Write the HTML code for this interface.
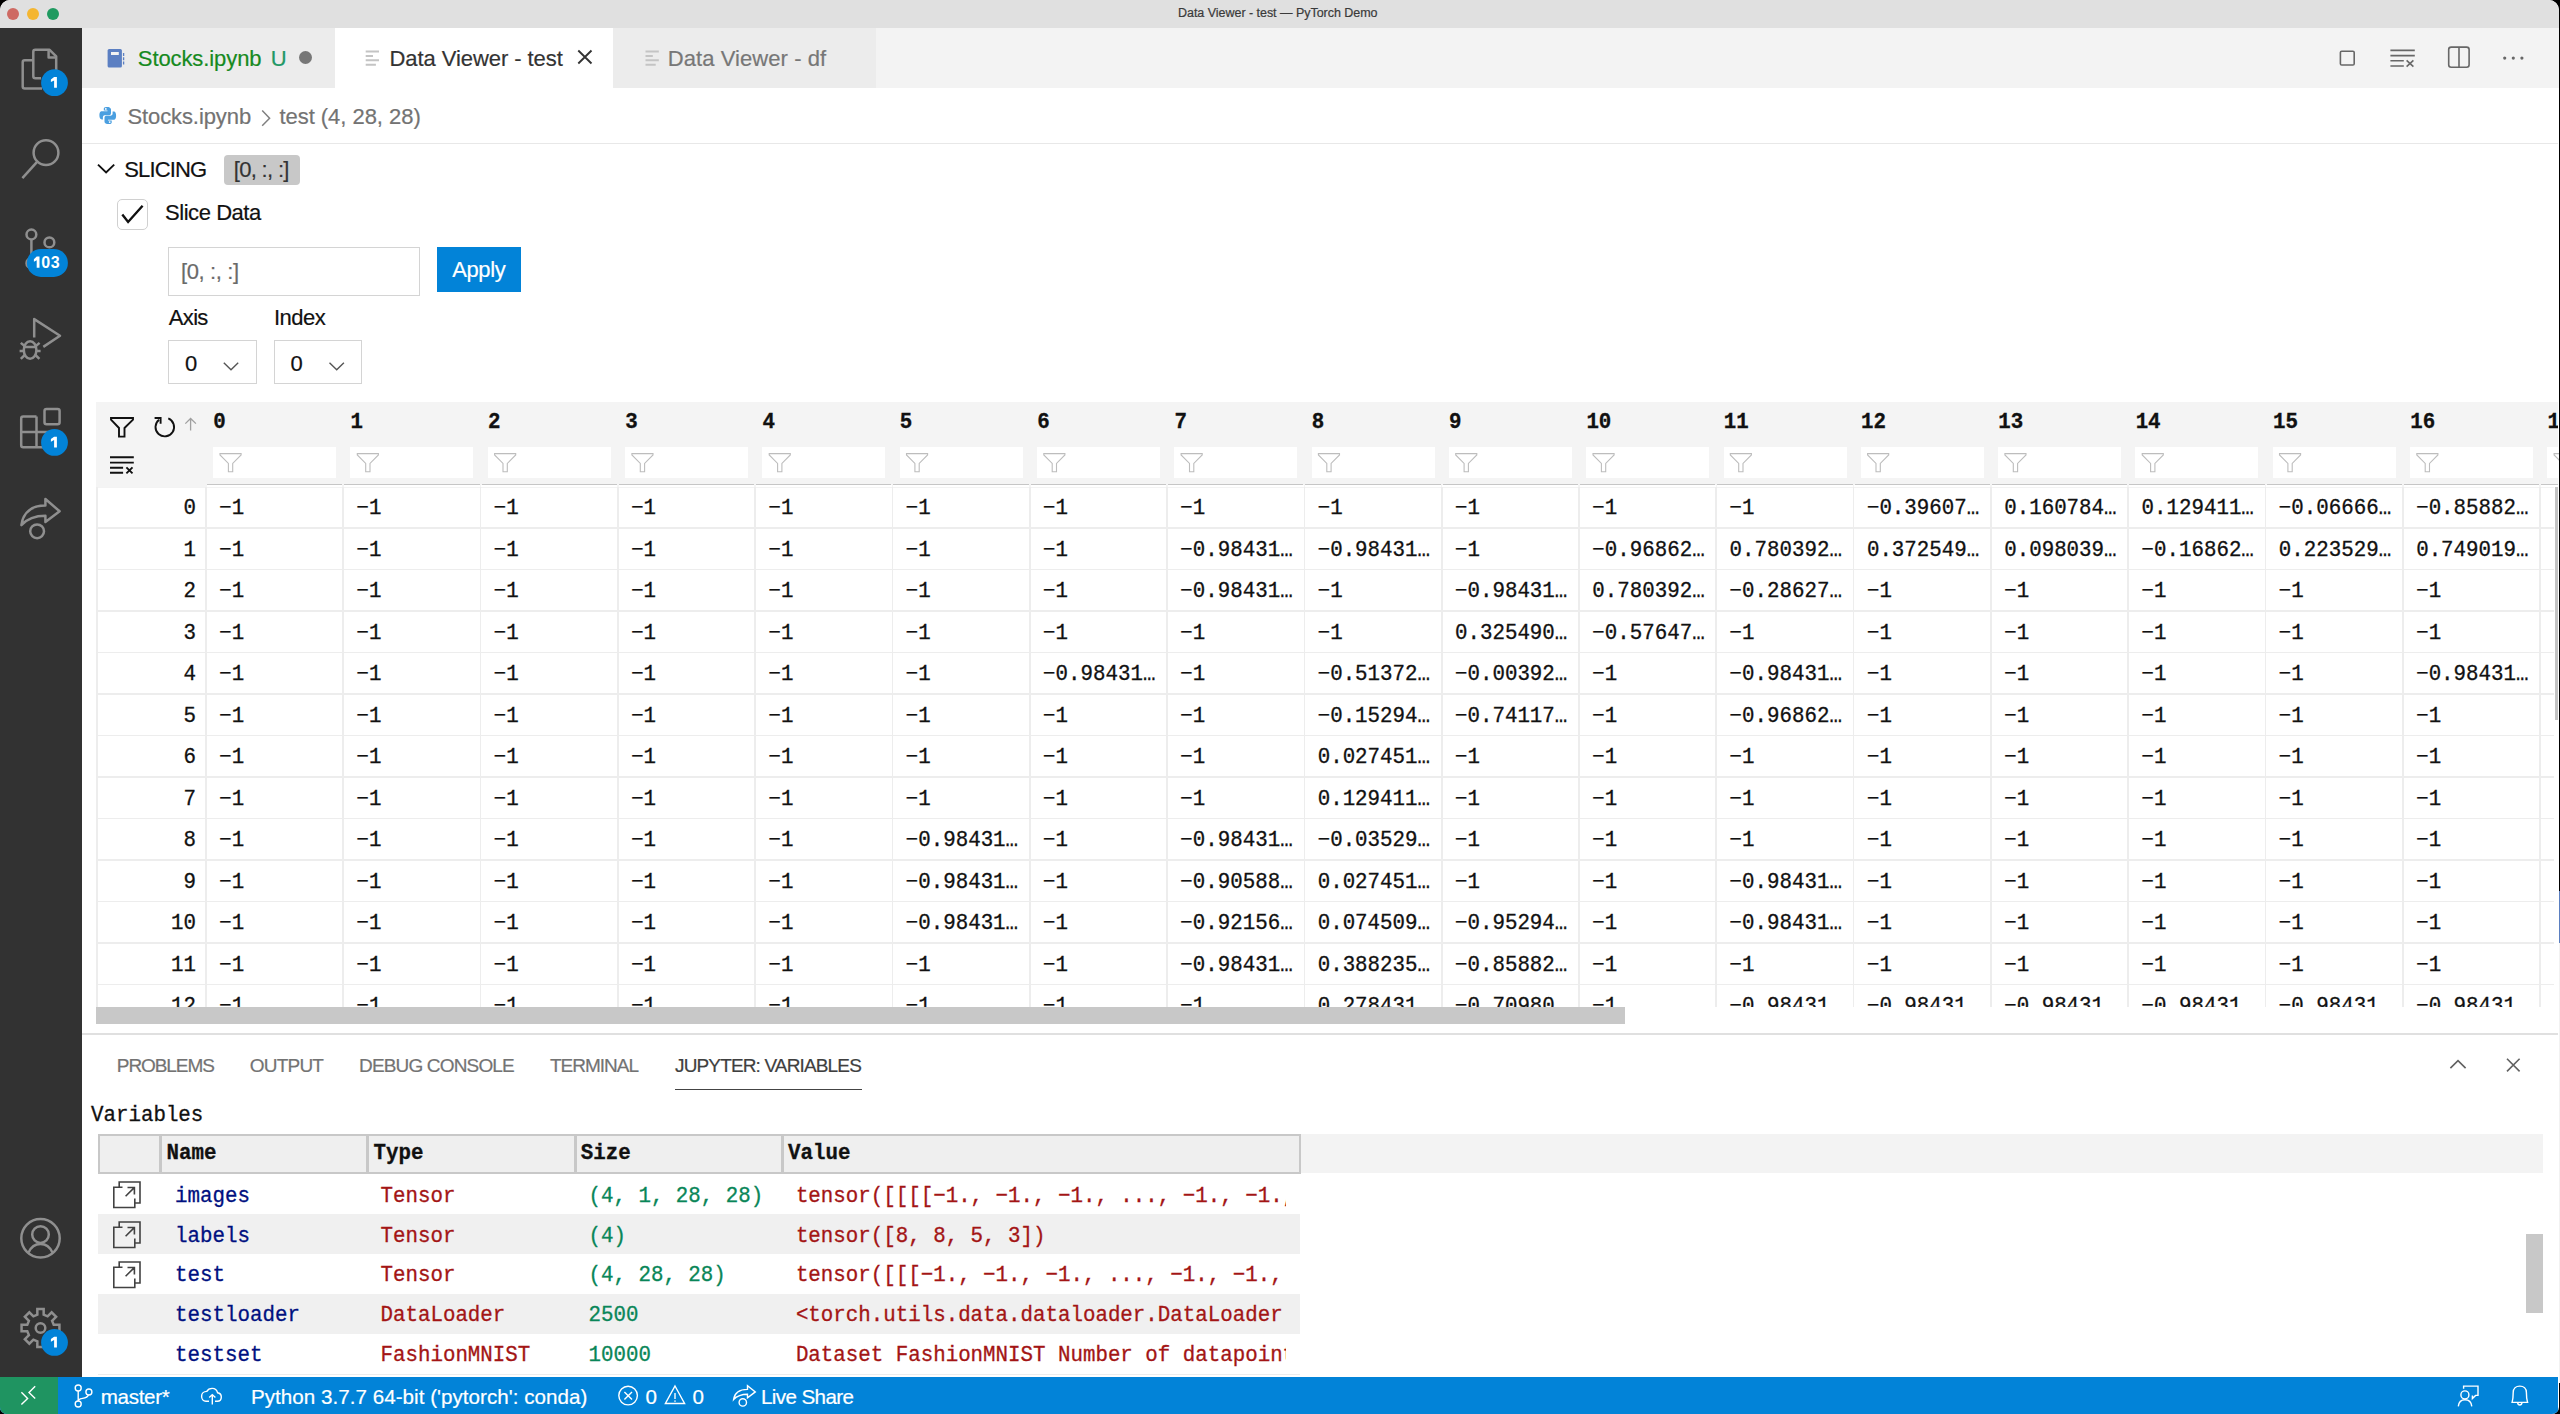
<!DOCTYPE html>
<html><head><meta charset="utf-8"><style>
*{box-sizing:border-box}
html,body{margin:0;padding:0}
body{width:2560px;height:1414px;overflow:hidden;background:#000;position:relative;font-family:"Liberation Sans", sans-serif}
.a{position:absolute}
.t{position:absolute;white-space:pre;line-height:1;-webkit-text-stroke:0.2px currentColor}
.m{font-family:"Liberation Mono", monospace;-webkit-text-stroke:0.3px currentColor}
svg{position:absolute;overflow:visible}
</style></head>
<body>
<div class="a" style="left:0;top:0;width:2559px;height:1414px;background:#fff;border-radius:10px 10px 7px 7px;overflow:hidden"><div class="a" style="left:0px;top:0px;width:2560px;height:28px;background:#e0e0e0;"></div><div class="a" style="left:7px;top:8px;width:12px;height:12px;background:#ce6a63;border-radius:6px"></div><div class="a" style="left:27px;top:8px;width:12px;height:12px;background:#f4b631;border-radius:6px"></div><div class="a" style="left:47px;top:8px;width:12px;height:12px;background:#1f9a60;border-radius:6px"></div><div class="t" style="left:1178.00px;top:7.22px;font-size:12.5px;color:#3a3a3a;letter-spacing:-0.031px;font-weight:normal;">Data Viewer - test — PyTorch Demo</div><div class="a" style="left:0px;top:28px;width:82px;height:1349px;background:#323232;"></div><div class="a" style="left:82px;top:28px;width:2478px;height:60px;background:#f3f3f3;"></div><div class="a" style="left:82px;top:28px;width:253px;height:60px;background:#ececec;"></div><div class="a" style="left:335px;top:28px;width:278px;height:60px;background:#ffffff;"></div><div class="a" style="left:613px;top:28px;width:263px;height:60px;background:#ececec;"></div><div class="t" style="left:137.80px;top:47.87px;font-size:22px;color:#168a1e;letter-spacing:-0.091px;font-weight:normal;">Stocks.ipynb</div><div class="t" style="left:270.80px;top:47.87px;font-size:22px;color:#239866;letter-spacing:0.000px;font-weight:normal;">U</div><div class="a" style="left:299px;top:50.5px;width:13px;height:13px;background:#777;border-radius:7px"></div><div class="t" style="left:389.40px;top:47.87px;font-size:22px;color:#333333;letter-spacing:-0.059px;font-weight:normal;">Data Viewer - test</div><div class="t" style="left:667.80px;top:47.87px;font-size:22px;color:#777777;letter-spacing:0.067px;font-weight:normal;">Data Viewer - df</div><div class="a" style="left:82px;top:143px;width:2476px;height:1px;background:#e8e8e8;"></div><div class="t" style="left:127.40px;top:105.87px;font-size:22px;color:#737373;letter-spacing:-0.091px;font-weight:normal;">Stocks.ipynb</div><div class="t" style="left:279.40px;top:105.87px;font-size:22px;color:#737373;letter-spacing:-0.033px;font-weight:normal;">test (4, 28, 28)</div><div class="t" style="left:124.20px;top:158.77px;font-size:22px;color:#111111;letter-spacing:-0.833px;font-weight:normal;">SLICING</div><div class="a" style="left:224px;top:155px;width:76px;height:30px;background:#c8c8c8;border-radius:4px"></div><div class="t" style="left:233.80px;top:158.67px;font-size:22px;color:#333333;letter-spacing:-0.688px;font-weight:normal;">[0, :, :]</div><div class="a" style="left:117px;top:199px;width:31px;height:31px;background:#fff;border-radius:5px;border:1px solid #d0d0d0"></div><div class="t" style="left:165.00px;top:202.37px;font-size:22px;color:#111111;letter-spacing:-0.444px;font-weight:normal;">Slice Data</div><div class="a" style="left:168px;top:247px;width:252px;height:49px;background:#fff;border:1.2px solid #d4d4d4"></div><div class="t" style="left:181.00px;top:261.37px;font-size:22px;color:#6a6a6a;letter-spacing:-0.375px;font-weight:normal;">[0, :, :]</div><div class="a" style="left:437px;top:247px;width:84px;height:45px;background:#0283d8;"></div><div class="t" style="left:452.20px;top:259.17px;font-size:22px;color:#ffffff;letter-spacing:-0.375px;font-weight:normal;">Apply</div><div class="t" style="left:168.80px;top:307.17px;font-size:22px;color:#111111;letter-spacing:-0.667px;font-weight:normal;">Axis</div><div class="t" style="left:274.00px;top:307.17px;font-size:22px;color:#111111;letter-spacing:-0.500px;font-weight:normal;">Index</div><div class="a" style="left:168px;top:340px;width:89px;height:44px;background:#fff;border:1.2px solid #d4d4d4"></div><div class="a" style="left:274px;top:340px;width:88px;height:44px;background:#fff;border:1.2px solid #d4d4d4"></div><div class="t" style="left:185.00px;top:353.17px;font-size:22px;color:#111111;letter-spacing:0.000px;font-weight:normal;">0</div><div class="t" style="left:290.60px;top:353.17px;font-size:22px;color:#111111;letter-spacing:0.000px;font-weight:normal;">0</div><div class="a" style="left:96px;top:401.5px;width:2462px;height:85.5px;background:#f4f4f4;"></div><div class="a" style="left:206.90px;top:484px;width:135.31px;height:1px;background:#c6c6c6;"></div><div class="a" style="left:206.70px;top:485px;width:135.71px;height:2.4px;background:#ffffff;"></div><div class="a" style="left:344.21px;top:484px;width:135.31px;height:1px;background:#c6c6c6;"></div><div class="a" style="left:344.01px;top:485px;width:135.71px;height:2.4px;background:#ffffff;"></div><div class="a" style="left:481.52px;top:484px;width:135.31px;height:1px;background:#c6c6c6;"></div><div class="a" style="left:481.32px;top:485px;width:135.71px;height:2.4px;background:#ffffff;"></div><div class="a" style="left:618.83px;top:484px;width:135.31px;height:1px;background:#c6c6c6;"></div><div class="a" style="left:618.63px;top:485px;width:135.71px;height:2.4px;background:#ffffff;"></div><div class="a" style="left:756.14px;top:484px;width:135.31px;height:1px;background:#c6c6c6;"></div><div class="a" style="left:755.94px;top:485px;width:135.71px;height:2.4px;background:#ffffff;"></div><div class="a" style="left:893.45px;top:484px;width:135.31px;height:1px;background:#c6c6c6;"></div><div class="a" style="left:893.25px;top:485px;width:135.71px;height:2.4px;background:#ffffff;"></div><div class="a" style="left:1030.76px;top:484px;width:135.31px;height:1px;background:#c6c6c6;"></div><div class="a" style="left:1030.56px;top:485px;width:135.71px;height:2.4px;background:#ffffff;"></div><div class="a" style="left:1168.07px;top:484px;width:135.31px;height:1px;background:#c6c6c6;"></div><div class="a" style="left:1167.87px;top:485px;width:135.71px;height:2.4px;background:#ffffff;"></div><div class="a" style="left:1305.38px;top:484px;width:135.31px;height:1px;background:#c6c6c6;"></div><div class="a" style="left:1305.18px;top:485px;width:135.71px;height:2.4px;background:#ffffff;"></div><div class="a" style="left:1442.69px;top:484px;width:135.31px;height:1px;background:#c6c6c6;"></div><div class="a" style="left:1442.49px;top:485px;width:135.71px;height:2.4px;background:#ffffff;"></div><div class="a" style="left:1580.00px;top:484px;width:135.31px;height:1px;background:#c6c6c6;"></div><div class="a" style="left:1579.80px;top:485px;width:135.71px;height:2.4px;background:#ffffff;"></div><div class="a" style="left:1717.31px;top:484px;width:135.31px;height:1px;background:#c6c6c6;"></div><div class="a" style="left:1717.11px;top:485px;width:135.71px;height:2.4px;background:#ffffff;"></div><div class="a" style="left:1854.62px;top:484px;width:135.31px;height:1px;background:#c6c6c6;"></div><div class="a" style="left:1854.42px;top:485px;width:135.71px;height:2.4px;background:#ffffff;"></div><div class="a" style="left:1991.93px;top:484px;width:135.31px;height:1px;background:#c6c6c6;"></div><div class="a" style="left:1991.73px;top:485px;width:135.71px;height:2.4px;background:#ffffff;"></div><div class="a" style="left:2129.24px;top:484px;width:135.31px;height:1px;background:#c6c6c6;"></div><div class="a" style="left:2129.04px;top:485px;width:135.71px;height:2.4px;background:#ffffff;"></div><div class="a" style="left:2266.55px;top:484px;width:135.31px;height:1px;background:#c6c6c6;"></div><div class="a" style="left:2266.35px;top:485px;width:135.71px;height:2.4px;background:#ffffff;"></div><div class="a" style="left:2403.86px;top:484px;width:135.31px;height:1px;background:#c6c6c6;"></div><div class="a" style="left:2403.66px;top:485px;width:135.71px;height:2.4px;background:#ffffff;"></div><div class="a" style="left:2541.17px;top:484px;width:135.31px;height:1px;background:#c6c6c6;"></div><div class="a" style="left:2540.97px;top:485px;width:135.71px;height:2.4px;background:#ffffff;"></div><div class="a" style="left:0;top:487px;width:2558px;height:520px;overflow:hidden"><div class="a" style="left:96px;top:0px;width:2458px;height:1.2px;background:#f3f3f3;"></div><div class="a" style="left:96px;top:40.05px;width:2458px;height:1.7px;background:#ededed;"></div><div class="t m" style="left:195.90px;top:12.07px;font-size:20.8px;color:#111;font-weight:normal;transform-origin:100% 15.93px;transform:translateX(-100%) scaleY(1.03);">0</div><div class="t m" style="left:219.20px;top:12.07px;font-size:20.8px;color:#111;font-weight:normal;transform-origin:0 15.93px;transform:scaleY(1.03);">−1</div><div class="t m" style="left:356.51px;top:12.07px;font-size:20.8px;color:#111;font-weight:normal;transform-origin:0 15.93px;transform:scaleY(1.03);">−1</div><div class="t m" style="left:493.82px;top:12.07px;font-size:20.8px;color:#111;font-weight:normal;transform-origin:0 15.93px;transform:scaleY(1.03);">−1</div><div class="t m" style="left:631.13px;top:12.07px;font-size:20.8px;color:#111;font-weight:normal;transform-origin:0 15.93px;transform:scaleY(1.03);">−1</div><div class="t m" style="left:768.44px;top:12.07px;font-size:20.8px;color:#111;font-weight:normal;transform-origin:0 15.93px;transform:scaleY(1.03);">−1</div><div class="t m" style="left:905.75px;top:12.07px;font-size:20.8px;color:#111;font-weight:normal;transform-origin:0 15.93px;transform:scaleY(1.03);">−1</div><div class="t m" style="left:1043.06px;top:12.07px;font-size:20.8px;color:#111;font-weight:normal;transform-origin:0 15.93px;transform:scaleY(1.03);">−1</div><div class="t m" style="left:1180.37px;top:12.07px;font-size:20.8px;color:#111;font-weight:normal;transform-origin:0 15.93px;transform:scaleY(1.03);">−1</div><div class="t m" style="left:1317.68px;top:12.07px;font-size:20.8px;color:#111;font-weight:normal;transform-origin:0 15.93px;transform:scaleY(1.03);">−1</div><div class="t m" style="left:1454.99px;top:12.07px;font-size:20.8px;color:#111;font-weight:normal;transform-origin:0 15.93px;transform:scaleY(1.03);">−1</div><div class="t m" style="left:1592.30px;top:12.07px;font-size:20.8px;color:#111;font-weight:normal;transform-origin:0 15.93px;transform:scaleY(1.03);">−1</div><div class="t m" style="left:1729.61px;top:12.07px;font-size:20.8px;color:#111;font-weight:normal;transform-origin:0 15.93px;transform:scaleY(1.03);">−1</div><div class="t m" style="left:1866.92px;top:12.07px;font-size:20.8px;color:#111;font-weight:normal;transform-origin:0 15.93px;transform:scaleY(1.03);">−0.39607…</div><div class="t m" style="left:2004.23px;top:12.07px;font-size:20.8px;color:#111;font-weight:normal;transform-origin:0 15.93px;transform:scaleY(1.03);">0.160784…</div><div class="t m" style="left:2141.54px;top:12.07px;font-size:20.8px;color:#111;font-weight:normal;transform-origin:0 15.93px;transform:scaleY(1.03);">0.129411…</div><div class="t m" style="left:2278.85px;top:12.07px;font-size:20.8px;color:#111;font-weight:normal;transform-origin:0 15.93px;transform:scaleY(1.03);">−0.06666…</div><div class="t m" style="left:2416.16px;top:12.07px;font-size:20.8px;color:#111;font-weight:normal;transform-origin:0 15.93px;transform:scaleY(1.03);">−0.85882…</div><div class="a" style="left:96px;top:81.57px;width:2458px;height:1.7px;background:#ededed;"></div><div class="t m" style="left:195.90px;top:53.59px;font-size:20.8px;color:#111;font-weight:normal;transform-origin:100% 15.93px;transform:translateX(-100%) scaleY(1.03);">1</div><div class="t m" style="left:219.20px;top:53.59px;font-size:20.8px;color:#111;font-weight:normal;transform-origin:0 15.93px;transform:scaleY(1.03);">−1</div><div class="t m" style="left:356.51px;top:53.59px;font-size:20.8px;color:#111;font-weight:normal;transform-origin:0 15.93px;transform:scaleY(1.03);">−1</div><div class="t m" style="left:493.82px;top:53.59px;font-size:20.8px;color:#111;font-weight:normal;transform-origin:0 15.93px;transform:scaleY(1.03);">−1</div><div class="t m" style="left:631.13px;top:53.59px;font-size:20.8px;color:#111;font-weight:normal;transform-origin:0 15.93px;transform:scaleY(1.03);">−1</div><div class="t m" style="left:768.44px;top:53.59px;font-size:20.8px;color:#111;font-weight:normal;transform-origin:0 15.93px;transform:scaleY(1.03);">−1</div><div class="t m" style="left:905.75px;top:53.59px;font-size:20.8px;color:#111;font-weight:normal;transform-origin:0 15.93px;transform:scaleY(1.03);">−1</div><div class="t m" style="left:1043.06px;top:53.59px;font-size:20.8px;color:#111;font-weight:normal;transform-origin:0 15.93px;transform:scaleY(1.03);">−1</div><div class="t m" style="left:1180.37px;top:53.59px;font-size:20.8px;color:#111;font-weight:normal;transform-origin:0 15.93px;transform:scaleY(1.03);">−0.98431…</div><div class="t m" style="left:1317.68px;top:53.59px;font-size:20.8px;color:#111;font-weight:normal;transform-origin:0 15.93px;transform:scaleY(1.03);">−0.98431…</div><div class="t m" style="left:1454.99px;top:53.59px;font-size:20.8px;color:#111;font-weight:normal;transform-origin:0 15.93px;transform:scaleY(1.03);">−1</div><div class="t m" style="left:1592.30px;top:53.59px;font-size:20.8px;color:#111;font-weight:normal;transform-origin:0 15.93px;transform:scaleY(1.03);">−0.96862…</div><div class="t m" style="left:1729.61px;top:53.59px;font-size:20.8px;color:#111;font-weight:normal;transform-origin:0 15.93px;transform:scaleY(1.03);">0.780392…</div><div class="t m" style="left:1866.92px;top:53.59px;font-size:20.8px;color:#111;font-weight:normal;transform-origin:0 15.93px;transform:scaleY(1.03);">0.372549…</div><div class="t m" style="left:2004.23px;top:53.59px;font-size:20.8px;color:#111;font-weight:normal;transform-origin:0 15.93px;transform:scaleY(1.03);">0.098039…</div><div class="t m" style="left:2141.54px;top:53.59px;font-size:20.8px;color:#111;font-weight:normal;transform-origin:0 15.93px;transform:scaleY(1.03);">−0.16862…</div><div class="t m" style="left:2278.85px;top:53.59px;font-size:20.8px;color:#111;font-weight:normal;transform-origin:0 15.93px;transform:scaleY(1.03);">0.223529…</div><div class="t m" style="left:2416.16px;top:53.59px;font-size:20.8px;color:#111;font-weight:normal;transform-origin:0 15.93px;transform:scaleY(1.03);">0.749019…</div><div class="a" style="left:96px;top:123.09px;width:2458px;height:1.7px;background:#ededed;"></div><div class="t m" style="left:195.90px;top:95.11px;font-size:20.8px;color:#111;font-weight:normal;transform-origin:100% 15.93px;transform:translateX(-100%) scaleY(1.03);">2</div><div class="t m" style="left:219.20px;top:95.11px;font-size:20.8px;color:#111;font-weight:normal;transform-origin:0 15.93px;transform:scaleY(1.03);">−1</div><div class="t m" style="left:356.51px;top:95.11px;font-size:20.8px;color:#111;font-weight:normal;transform-origin:0 15.93px;transform:scaleY(1.03);">−1</div><div class="t m" style="left:493.82px;top:95.11px;font-size:20.8px;color:#111;font-weight:normal;transform-origin:0 15.93px;transform:scaleY(1.03);">−1</div><div class="t m" style="left:631.13px;top:95.11px;font-size:20.8px;color:#111;font-weight:normal;transform-origin:0 15.93px;transform:scaleY(1.03);">−1</div><div class="t m" style="left:768.44px;top:95.11px;font-size:20.8px;color:#111;font-weight:normal;transform-origin:0 15.93px;transform:scaleY(1.03);">−1</div><div class="t m" style="left:905.75px;top:95.11px;font-size:20.8px;color:#111;font-weight:normal;transform-origin:0 15.93px;transform:scaleY(1.03);">−1</div><div class="t m" style="left:1043.06px;top:95.11px;font-size:20.8px;color:#111;font-weight:normal;transform-origin:0 15.93px;transform:scaleY(1.03);">−1</div><div class="t m" style="left:1180.37px;top:95.11px;font-size:20.8px;color:#111;font-weight:normal;transform-origin:0 15.93px;transform:scaleY(1.03);">−0.98431…</div><div class="t m" style="left:1317.68px;top:95.11px;font-size:20.8px;color:#111;font-weight:normal;transform-origin:0 15.93px;transform:scaleY(1.03);">−1</div><div class="t m" style="left:1454.99px;top:95.11px;font-size:20.8px;color:#111;font-weight:normal;transform-origin:0 15.93px;transform:scaleY(1.03);">−0.98431…</div><div class="t m" style="left:1592.30px;top:95.11px;font-size:20.8px;color:#111;font-weight:normal;transform-origin:0 15.93px;transform:scaleY(1.03);">0.780392…</div><div class="t m" style="left:1729.61px;top:95.11px;font-size:20.8px;color:#111;font-weight:normal;transform-origin:0 15.93px;transform:scaleY(1.03);">−0.28627…</div><div class="t m" style="left:1866.92px;top:95.11px;font-size:20.8px;color:#111;font-weight:normal;transform-origin:0 15.93px;transform:scaleY(1.03);">−1</div><div class="t m" style="left:2004.23px;top:95.11px;font-size:20.8px;color:#111;font-weight:normal;transform-origin:0 15.93px;transform:scaleY(1.03);">−1</div><div class="t m" style="left:2141.54px;top:95.11px;font-size:20.8px;color:#111;font-weight:normal;transform-origin:0 15.93px;transform:scaleY(1.03);">−1</div><div class="t m" style="left:2278.85px;top:95.11px;font-size:20.8px;color:#111;font-weight:normal;transform-origin:0 15.93px;transform:scaleY(1.03);">−1</div><div class="t m" style="left:2416.16px;top:95.11px;font-size:20.8px;color:#111;font-weight:normal;transform-origin:0 15.93px;transform:scaleY(1.03);">−1</div><div class="a" style="left:96px;top:164.61px;width:2458px;height:1.7px;background:#ededed;"></div><div class="t m" style="left:195.90px;top:136.63px;font-size:20.8px;color:#111;font-weight:normal;transform-origin:100% 15.93px;transform:translateX(-100%) scaleY(1.03);">3</div><div class="t m" style="left:219.20px;top:136.63px;font-size:20.8px;color:#111;font-weight:normal;transform-origin:0 15.93px;transform:scaleY(1.03);">−1</div><div class="t m" style="left:356.51px;top:136.63px;font-size:20.8px;color:#111;font-weight:normal;transform-origin:0 15.93px;transform:scaleY(1.03);">−1</div><div class="t m" style="left:493.82px;top:136.63px;font-size:20.8px;color:#111;font-weight:normal;transform-origin:0 15.93px;transform:scaleY(1.03);">−1</div><div class="t m" style="left:631.13px;top:136.63px;font-size:20.8px;color:#111;font-weight:normal;transform-origin:0 15.93px;transform:scaleY(1.03);">−1</div><div class="t m" style="left:768.44px;top:136.63px;font-size:20.8px;color:#111;font-weight:normal;transform-origin:0 15.93px;transform:scaleY(1.03);">−1</div><div class="t m" style="left:905.75px;top:136.63px;font-size:20.8px;color:#111;font-weight:normal;transform-origin:0 15.93px;transform:scaleY(1.03);">−1</div><div class="t m" style="left:1043.06px;top:136.63px;font-size:20.8px;color:#111;font-weight:normal;transform-origin:0 15.93px;transform:scaleY(1.03);">−1</div><div class="t m" style="left:1180.37px;top:136.63px;font-size:20.8px;color:#111;font-weight:normal;transform-origin:0 15.93px;transform:scaleY(1.03);">−1</div><div class="t m" style="left:1317.68px;top:136.63px;font-size:20.8px;color:#111;font-weight:normal;transform-origin:0 15.93px;transform:scaleY(1.03);">−1</div><div class="t m" style="left:1454.99px;top:136.63px;font-size:20.8px;color:#111;font-weight:normal;transform-origin:0 15.93px;transform:scaleY(1.03);">0.325490…</div><div class="t m" style="left:1592.30px;top:136.63px;font-size:20.8px;color:#111;font-weight:normal;transform-origin:0 15.93px;transform:scaleY(1.03);">−0.57647…</div><div class="t m" style="left:1729.61px;top:136.63px;font-size:20.8px;color:#111;font-weight:normal;transform-origin:0 15.93px;transform:scaleY(1.03);">−1</div><div class="t m" style="left:1866.92px;top:136.63px;font-size:20.8px;color:#111;font-weight:normal;transform-origin:0 15.93px;transform:scaleY(1.03);">−1</div><div class="t m" style="left:2004.23px;top:136.63px;font-size:20.8px;color:#111;font-weight:normal;transform-origin:0 15.93px;transform:scaleY(1.03);">−1</div><div class="t m" style="left:2141.54px;top:136.63px;font-size:20.8px;color:#111;font-weight:normal;transform-origin:0 15.93px;transform:scaleY(1.03);">−1</div><div class="t m" style="left:2278.85px;top:136.63px;font-size:20.8px;color:#111;font-weight:normal;transform-origin:0 15.93px;transform:scaleY(1.03);">−1</div><div class="t m" style="left:2416.16px;top:136.63px;font-size:20.8px;color:#111;font-weight:normal;transform-origin:0 15.93px;transform:scaleY(1.03);">−1</div><div class="a" style="left:96px;top:206.13px;width:2458px;height:1.7px;background:#ededed;"></div><div class="t m" style="left:195.90px;top:178.15px;font-size:20.8px;color:#111;font-weight:normal;transform-origin:100% 15.93px;transform:translateX(-100%) scaleY(1.03);">4</div><div class="t m" style="left:219.20px;top:178.15px;font-size:20.8px;color:#111;font-weight:normal;transform-origin:0 15.93px;transform:scaleY(1.03);">−1</div><div class="t m" style="left:356.51px;top:178.15px;font-size:20.8px;color:#111;font-weight:normal;transform-origin:0 15.93px;transform:scaleY(1.03);">−1</div><div class="t m" style="left:493.82px;top:178.15px;font-size:20.8px;color:#111;font-weight:normal;transform-origin:0 15.93px;transform:scaleY(1.03);">−1</div><div class="t m" style="left:631.13px;top:178.15px;font-size:20.8px;color:#111;font-weight:normal;transform-origin:0 15.93px;transform:scaleY(1.03);">−1</div><div class="t m" style="left:768.44px;top:178.15px;font-size:20.8px;color:#111;font-weight:normal;transform-origin:0 15.93px;transform:scaleY(1.03);">−1</div><div class="t m" style="left:905.75px;top:178.15px;font-size:20.8px;color:#111;font-weight:normal;transform-origin:0 15.93px;transform:scaleY(1.03);">−1</div><div class="t m" style="left:1043.06px;top:178.15px;font-size:20.8px;color:#111;font-weight:normal;transform-origin:0 15.93px;transform:scaleY(1.03);">−0.98431…</div><div class="t m" style="left:1180.37px;top:178.15px;font-size:20.8px;color:#111;font-weight:normal;transform-origin:0 15.93px;transform:scaleY(1.03);">−1</div><div class="t m" style="left:1317.68px;top:178.15px;font-size:20.8px;color:#111;font-weight:normal;transform-origin:0 15.93px;transform:scaleY(1.03);">−0.51372…</div><div class="t m" style="left:1454.99px;top:178.15px;font-size:20.8px;color:#111;font-weight:normal;transform-origin:0 15.93px;transform:scaleY(1.03);">−0.00392…</div><div class="t m" style="left:1592.30px;top:178.15px;font-size:20.8px;color:#111;font-weight:normal;transform-origin:0 15.93px;transform:scaleY(1.03);">−1</div><div class="t m" style="left:1729.61px;top:178.15px;font-size:20.8px;color:#111;font-weight:normal;transform-origin:0 15.93px;transform:scaleY(1.03);">−0.98431…</div><div class="t m" style="left:1866.92px;top:178.15px;font-size:20.8px;color:#111;font-weight:normal;transform-origin:0 15.93px;transform:scaleY(1.03);">−1</div><div class="t m" style="left:2004.23px;top:178.15px;font-size:20.8px;color:#111;font-weight:normal;transform-origin:0 15.93px;transform:scaleY(1.03);">−1</div><div class="t m" style="left:2141.54px;top:178.15px;font-size:20.8px;color:#111;font-weight:normal;transform-origin:0 15.93px;transform:scaleY(1.03);">−1</div><div class="t m" style="left:2278.85px;top:178.15px;font-size:20.8px;color:#111;font-weight:normal;transform-origin:0 15.93px;transform:scaleY(1.03);">−1</div><div class="t m" style="left:2416.16px;top:178.15px;font-size:20.8px;color:#111;font-weight:normal;transform-origin:0 15.93px;transform:scaleY(1.03);">−0.98431…</div><div class="a" style="left:96px;top:247.65px;width:2458px;height:1.7px;background:#ededed;"></div><div class="t m" style="left:195.90px;top:219.67px;font-size:20.8px;color:#111;font-weight:normal;transform-origin:100% 15.93px;transform:translateX(-100%) scaleY(1.03);">5</div><div class="t m" style="left:219.20px;top:219.67px;font-size:20.8px;color:#111;font-weight:normal;transform-origin:0 15.93px;transform:scaleY(1.03);">−1</div><div class="t m" style="left:356.51px;top:219.67px;font-size:20.8px;color:#111;font-weight:normal;transform-origin:0 15.93px;transform:scaleY(1.03);">−1</div><div class="t m" style="left:493.82px;top:219.67px;font-size:20.8px;color:#111;font-weight:normal;transform-origin:0 15.93px;transform:scaleY(1.03);">−1</div><div class="t m" style="left:631.13px;top:219.67px;font-size:20.8px;color:#111;font-weight:normal;transform-origin:0 15.93px;transform:scaleY(1.03);">−1</div><div class="t m" style="left:768.44px;top:219.67px;font-size:20.8px;color:#111;font-weight:normal;transform-origin:0 15.93px;transform:scaleY(1.03);">−1</div><div class="t m" style="left:905.75px;top:219.67px;font-size:20.8px;color:#111;font-weight:normal;transform-origin:0 15.93px;transform:scaleY(1.03);">−1</div><div class="t m" style="left:1043.06px;top:219.67px;font-size:20.8px;color:#111;font-weight:normal;transform-origin:0 15.93px;transform:scaleY(1.03);">−1</div><div class="t m" style="left:1180.37px;top:219.67px;font-size:20.8px;color:#111;font-weight:normal;transform-origin:0 15.93px;transform:scaleY(1.03);">−1</div><div class="t m" style="left:1317.68px;top:219.67px;font-size:20.8px;color:#111;font-weight:normal;transform-origin:0 15.93px;transform:scaleY(1.03);">−0.15294…</div><div class="t m" style="left:1454.99px;top:219.67px;font-size:20.8px;color:#111;font-weight:normal;transform-origin:0 15.93px;transform:scaleY(1.03);">−0.74117…</div><div class="t m" style="left:1592.30px;top:219.67px;font-size:20.8px;color:#111;font-weight:normal;transform-origin:0 15.93px;transform:scaleY(1.03);">−1</div><div class="t m" style="left:1729.61px;top:219.67px;font-size:20.8px;color:#111;font-weight:normal;transform-origin:0 15.93px;transform:scaleY(1.03);">−0.96862…</div><div class="t m" style="left:1866.92px;top:219.67px;font-size:20.8px;color:#111;font-weight:normal;transform-origin:0 15.93px;transform:scaleY(1.03);">−1</div><div class="t m" style="left:2004.23px;top:219.67px;font-size:20.8px;color:#111;font-weight:normal;transform-origin:0 15.93px;transform:scaleY(1.03);">−1</div><div class="t m" style="left:2141.54px;top:219.67px;font-size:20.8px;color:#111;font-weight:normal;transform-origin:0 15.93px;transform:scaleY(1.03);">−1</div><div class="t m" style="left:2278.85px;top:219.67px;font-size:20.8px;color:#111;font-weight:normal;transform-origin:0 15.93px;transform:scaleY(1.03);">−1</div><div class="t m" style="left:2416.16px;top:219.67px;font-size:20.8px;color:#111;font-weight:normal;transform-origin:0 15.93px;transform:scaleY(1.03);">−1</div><div class="a" style="left:96px;top:289.17px;width:2458px;height:1.7px;background:#ededed;"></div><div class="t m" style="left:195.90px;top:261.19px;font-size:20.8px;color:#111;font-weight:normal;transform-origin:100% 15.93px;transform:translateX(-100%) scaleY(1.03);">6</div><div class="t m" style="left:219.20px;top:261.19px;font-size:20.8px;color:#111;font-weight:normal;transform-origin:0 15.93px;transform:scaleY(1.03);">−1</div><div class="t m" style="left:356.51px;top:261.19px;font-size:20.8px;color:#111;font-weight:normal;transform-origin:0 15.93px;transform:scaleY(1.03);">−1</div><div class="t m" style="left:493.82px;top:261.19px;font-size:20.8px;color:#111;font-weight:normal;transform-origin:0 15.93px;transform:scaleY(1.03);">−1</div><div class="t m" style="left:631.13px;top:261.19px;font-size:20.8px;color:#111;font-weight:normal;transform-origin:0 15.93px;transform:scaleY(1.03);">−1</div><div class="t m" style="left:768.44px;top:261.19px;font-size:20.8px;color:#111;font-weight:normal;transform-origin:0 15.93px;transform:scaleY(1.03);">−1</div><div class="t m" style="left:905.75px;top:261.19px;font-size:20.8px;color:#111;font-weight:normal;transform-origin:0 15.93px;transform:scaleY(1.03);">−1</div><div class="t m" style="left:1043.06px;top:261.19px;font-size:20.8px;color:#111;font-weight:normal;transform-origin:0 15.93px;transform:scaleY(1.03);">−1</div><div class="t m" style="left:1180.37px;top:261.19px;font-size:20.8px;color:#111;font-weight:normal;transform-origin:0 15.93px;transform:scaleY(1.03);">−1</div><div class="t m" style="left:1317.68px;top:261.19px;font-size:20.8px;color:#111;font-weight:normal;transform-origin:0 15.93px;transform:scaleY(1.03);">0.027451…</div><div class="t m" style="left:1454.99px;top:261.19px;font-size:20.8px;color:#111;font-weight:normal;transform-origin:0 15.93px;transform:scaleY(1.03);">−1</div><div class="t m" style="left:1592.30px;top:261.19px;font-size:20.8px;color:#111;font-weight:normal;transform-origin:0 15.93px;transform:scaleY(1.03);">−1</div><div class="t m" style="left:1729.61px;top:261.19px;font-size:20.8px;color:#111;font-weight:normal;transform-origin:0 15.93px;transform:scaleY(1.03);">−1</div><div class="t m" style="left:1866.92px;top:261.19px;font-size:20.8px;color:#111;font-weight:normal;transform-origin:0 15.93px;transform:scaleY(1.03);">−1</div><div class="t m" style="left:2004.23px;top:261.19px;font-size:20.8px;color:#111;font-weight:normal;transform-origin:0 15.93px;transform:scaleY(1.03);">−1</div><div class="t m" style="left:2141.54px;top:261.19px;font-size:20.8px;color:#111;font-weight:normal;transform-origin:0 15.93px;transform:scaleY(1.03);">−1</div><div class="t m" style="left:2278.85px;top:261.19px;font-size:20.8px;color:#111;font-weight:normal;transform-origin:0 15.93px;transform:scaleY(1.03);">−1</div><div class="t m" style="left:2416.16px;top:261.19px;font-size:20.8px;color:#111;font-weight:normal;transform-origin:0 15.93px;transform:scaleY(1.03);">−1</div><div class="a" style="left:96px;top:330.69px;width:2458px;height:1.7px;background:#ededed;"></div><div class="t m" style="left:195.90px;top:302.71px;font-size:20.8px;color:#111;font-weight:normal;transform-origin:100% 15.93px;transform:translateX(-100%) scaleY(1.03);">7</div><div class="t m" style="left:219.20px;top:302.71px;font-size:20.8px;color:#111;font-weight:normal;transform-origin:0 15.93px;transform:scaleY(1.03);">−1</div><div class="t m" style="left:356.51px;top:302.71px;font-size:20.8px;color:#111;font-weight:normal;transform-origin:0 15.93px;transform:scaleY(1.03);">−1</div><div class="t m" style="left:493.82px;top:302.71px;font-size:20.8px;color:#111;font-weight:normal;transform-origin:0 15.93px;transform:scaleY(1.03);">−1</div><div class="t m" style="left:631.13px;top:302.71px;font-size:20.8px;color:#111;font-weight:normal;transform-origin:0 15.93px;transform:scaleY(1.03);">−1</div><div class="t m" style="left:768.44px;top:302.71px;font-size:20.8px;color:#111;font-weight:normal;transform-origin:0 15.93px;transform:scaleY(1.03);">−1</div><div class="t m" style="left:905.75px;top:302.71px;font-size:20.8px;color:#111;font-weight:normal;transform-origin:0 15.93px;transform:scaleY(1.03);">−1</div><div class="t m" style="left:1043.06px;top:302.71px;font-size:20.8px;color:#111;font-weight:normal;transform-origin:0 15.93px;transform:scaleY(1.03);">−1</div><div class="t m" style="left:1180.37px;top:302.71px;font-size:20.8px;color:#111;font-weight:normal;transform-origin:0 15.93px;transform:scaleY(1.03);">−1</div><div class="t m" style="left:1317.68px;top:302.71px;font-size:20.8px;color:#111;font-weight:normal;transform-origin:0 15.93px;transform:scaleY(1.03);">0.129411…</div><div class="t m" style="left:1454.99px;top:302.71px;font-size:20.8px;color:#111;font-weight:normal;transform-origin:0 15.93px;transform:scaleY(1.03);">−1</div><div class="t m" style="left:1592.30px;top:302.71px;font-size:20.8px;color:#111;font-weight:normal;transform-origin:0 15.93px;transform:scaleY(1.03);">−1</div><div class="t m" style="left:1729.61px;top:302.71px;font-size:20.8px;color:#111;font-weight:normal;transform-origin:0 15.93px;transform:scaleY(1.03);">−1</div><div class="t m" style="left:1866.92px;top:302.71px;font-size:20.8px;color:#111;font-weight:normal;transform-origin:0 15.93px;transform:scaleY(1.03);">−1</div><div class="t m" style="left:2004.23px;top:302.71px;font-size:20.8px;color:#111;font-weight:normal;transform-origin:0 15.93px;transform:scaleY(1.03);">−1</div><div class="t m" style="left:2141.54px;top:302.71px;font-size:20.8px;color:#111;font-weight:normal;transform-origin:0 15.93px;transform:scaleY(1.03);">−1</div><div class="t m" style="left:2278.85px;top:302.71px;font-size:20.8px;color:#111;font-weight:normal;transform-origin:0 15.93px;transform:scaleY(1.03);">−1</div><div class="t m" style="left:2416.16px;top:302.71px;font-size:20.8px;color:#111;font-weight:normal;transform-origin:0 15.93px;transform:scaleY(1.03);">−1</div><div class="a" style="left:96px;top:372.21px;width:2458px;height:1.7px;background:#ededed;"></div><div class="t m" style="left:195.90px;top:344.23px;font-size:20.8px;color:#111;font-weight:normal;transform-origin:100% 15.93px;transform:translateX(-100%) scaleY(1.03);">8</div><div class="t m" style="left:219.20px;top:344.23px;font-size:20.8px;color:#111;font-weight:normal;transform-origin:0 15.93px;transform:scaleY(1.03);">−1</div><div class="t m" style="left:356.51px;top:344.23px;font-size:20.8px;color:#111;font-weight:normal;transform-origin:0 15.93px;transform:scaleY(1.03);">−1</div><div class="t m" style="left:493.82px;top:344.23px;font-size:20.8px;color:#111;font-weight:normal;transform-origin:0 15.93px;transform:scaleY(1.03);">−1</div><div class="t m" style="left:631.13px;top:344.23px;font-size:20.8px;color:#111;font-weight:normal;transform-origin:0 15.93px;transform:scaleY(1.03);">−1</div><div class="t m" style="left:768.44px;top:344.23px;font-size:20.8px;color:#111;font-weight:normal;transform-origin:0 15.93px;transform:scaleY(1.03);">−1</div><div class="t m" style="left:905.75px;top:344.23px;font-size:20.8px;color:#111;font-weight:normal;transform-origin:0 15.93px;transform:scaleY(1.03);">−0.98431…</div><div class="t m" style="left:1043.06px;top:344.23px;font-size:20.8px;color:#111;font-weight:normal;transform-origin:0 15.93px;transform:scaleY(1.03);">−1</div><div class="t m" style="left:1180.37px;top:344.23px;font-size:20.8px;color:#111;font-weight:normal;transform-origin:0 15.93px;transform:scaleY(1.03);">−0.98431…</div><div class="t m" style="left:1317.68px;top:344.23px;font-size:20.8px;color:#111;font-weight:normal;transform-origin:0 15.93px;transform:scaleY(1.03);">−0.03529…</div><div class="t m" style="left:1454.99px;top:344.23px;font-size:20.8px;color:#111;font-weight:normal;transform-origin:0 15.93px;transform:scaleY(1.03);">−1</div><div class="t m" style="left:1592.30px;top:344.23px;font-size:20.8px;color:#111;font-weight:normal;transform-origin:0 15.93px;transform:scaleY(1.03);">−1</div><div class="t m" style="left:1729.61px;top:344.23px;font-size:20.8px;color:#111;font-weight:normal;transform-origin:0 15.93px;transform:scaleY(1.03);">−1</div><div class="t m" style="left:1866.92px;top:344.23px;font-size:20.8px;color:#111;font-weight:normal;transform-origin:0 15.93px;transform:scaleY(1.03);">−1</div><div class="t m" style="left:2004.23px;top:344.23px;font-size:20.8px;color:#111;font-weight:normal;transform-origin:0 15.93px;transform:scaleY(1.03);">−1</div><div class="t m" style="left:2141.54px;top:344.23px;font-size:20.8px;color:#111;font-weight:normal;transform-origin:0 15.93px;transform:scaleY(1.03);">−1</div><div class="t m" style="left:2278.85px;top:344.23px;font-size:20.8px;color:#111;font-weight:normal;transform-origin:0 15.93px;transform:scaleY(1.03);">−1</div><div class="t m" style="left:2416.16px;top:344.23px;font-size:20.8px;color:#111;font-weight:normal;transform-origin:0 15.93px;transform:scaleY(1.03);">−1</div><div class="a" style="left:96px;top:413.73px;width:2458px;height:1.7px;background:#ededed;"></div><div class="t m" style="left:195.90px;top:385.75px;font-size:20.8px;color:#111;font-weight:normal;transform-origin:100% 15.93px;transform:translateX(-100%) scaleY(1.03);">9</div><div class="t m" style="left:219.20px;top:385.75px;font-size:20.8px;color:#111;font-weight:normal;transform-origin:0 15.93px;transform:scaleY(1.03);">−1</div><div class="t m" style="left:356.51px;top:385.75px;font-size:20.8px;color:#111;font-weight:normal;transform-origin:0 15.93px;transform:scaleY(1.03);">−1</div><div class="t m" style="left:493.82px;top:385.75px;font-size:20.8px;color:#111;font-weight:normal;transform-origin:0 15.93px;transform:scaleY(1.03);">−1</div><div class="t m" style="left:631.13px;top:385.75px;font-size:20.8px;color:#111;font-weight:normal;transform-origin:0 15.93px;transform:scaleY(1.03);">−1</div><div class="t m" style="left:768.44px;top:385.75px;font-size:20.8px;color:#111;font-weight:normal;transform-origin:0 15.93px;transform:scaleY(1.03);">−1</div><div class="t m" style="left:905.75px;top:385.75px;font-size:20.8px;color:#111;font-weight:normal;transform-origin:0 15.93px;transform:scaleY(1.03);">−0.98431…</div><div class="t m" style="left:1043.06px;top:385.75px;font-size:20.8px;color:#111;font-weight:normal;transform-origin:0 15.93px;transform:scaleY(1.03);">−1</div><div class="t m" style="left:1180.37px;top:385.75px;font-size:20.8px;color:#111;font-weight:normal;transform-origin:0 15.93px;transform:scaleY(1.03);">−0.90588…</div><div class="t m" style="left:1317.68px;top:385.75px;font-size:20.8px;color:#111;font-weight:normal;transform-origin:0 15.93px;transform:scaleY(1.03);">0.027451…</div><div class="t m" style="left:1454.99px;top:385.75px;font-size:20.8px;color:#111;font-weight:normal;transform-origin:0 15.93px;transform:scaleY(1.03);">−1</div><div class="t m" style="left:1592.30px;top:385.75px;font-size:20.8px;color:#111;font-weight:normal;transform-origin:0 15.93px;transform:scaleY(1.03);">−1</div><div class="t m" style="left:1729.61px;top:385.75px;font-size:20.8px;color:#111;font-weight:normal;transform-origin:0 15.93px;transform:scaleY(1.03);">−0.98431…</div><div class="t m" style="left:1866.92px;top:385.75px;font-size:20.8px;color:#111;font-weight:normal;transform-origin:0 15.93px;transform:scaleY(1.03);">−1</div><div class="t m" style="left:2004.23px;top:385.75px;font-size:20.8px;color:#111;font-weight:normal;transform-origin:0 15.93px;transform:scaleY(1.03);">−1</div><div class="t m" style="left:2141.54px;top:385.75px;font-size:20.8px;color:#111;font-weight:normal;transform-origin:0 15.93px;transform:scaleY(1.03);">−1</div><div class="t m" style="left:2278.85px;top:385.75px;font-size:20.8px;color:#111;font-weight:normal;transform-origin:0 15.93px;transform:scaleY(1.03);">−1</div><div class="t m" style="left:2416.16px;top:385.75px;font-size:20.8px;color:#111;font-weight:normal;transform-origin:0 15.93px;transform:scaleY(1.03);">−1</div><div class="a" style="left:96px;top:455.25px;width:2458px;height:1.7px;background:#ededed;"></div><div class="t m" style="left:195.90px;top:427.27px;font-size:20.8px;color:#111;font-weight:normal;transform-origin:100% 15.93px;transform:translateX(-100%) scaleY(1.03);">10</div><div class="t m" style="left:219.20px;top:427.27px;font-size:20.8px;color:#111;font-weight:normal;transform-origin:0 15.93px;transform:scaleY(1.03);">−1</div><div class="t m" style="left:356.51px;top:427.27px;font-size:20.8px;color:#111;font-weight:normal;transform-origin:0 15.93px;transform:scaleY(1.03);">−1</div><div class="t m" style="left:493.82px;top:427.27px;font-size:20.8px;color:#111;font-weight:normal;transform-origin:0 15.93px;transform:scaleY(1.03);">−1</div><div class="t m" style="left:631.13px;top:427.27px;font-size:20.8px;color:#111;font-weight:normal;transform-origin:0 15.93px;transform:scaleY(1.03);">−1</div><div class="t m" style="left:768.44px;top:427.27px;font-size:20.8px;color:#111;font-weight:normal;transform-origin:0 15.93px;transform:scaleY(1.03);">−1</div><div class="t m" style="left:905.75px;top:427.27px;font-size:20.8px;color:#111;font-weight:normal;transform-origin:0 15.93px;transform:scaleY(1.03);">−0.98431…</div><div class="t m" style="left:1043.06px;top:427.27px;font-size:20.8px;color:#111;font-weight:normal;transform-origin:0 15.93px;transform:scaleY(1.03);">−1</div><div class="t m" style="left:1180.37px;top:427.27px;font-size:20.8px;color:#111;font-weight:normal;transform-origin:0 15.93px;transform:scaleY(1.03);">−0.92156…</div><div class="t m" style="left:1317.68px;top:427.27px;font-size:20.8px;color:#111;font-weight:normal;transform-origin:0 15.93px;transform:scaleY(1.03);">0.074509…</div><div class="t m" style="left:1454.99px;top:427.27px;font-size:20.8px;color:#111;font-weight:normal;transform-origin:0 15.93px;transform:scaleY(1.03);">−0.95294…</div><div class="t m" style="left:1592.30px;top:427.27px;font-size:20.8px;color:#111;font-weight:normal;transform-origin:0 15.93px;transform:scaleY(1.03);">−1</div><div class="t m" style="left:1729.61px;top:427.27px;font-size:20.8px;color:#111;font-weight:normal;transform-origin:0 15.93px;transform:scaleY(1.03);">−0.98431…</div><div class="t m" style="left:1866.92px;top:427.27px;font-size:20.8px;color:#111;font-weight:normal;transform-origin:0 15.93px;transform:scaleY(1.03);">−1</div><div class="t m" style="left:2004.23px;top:427.27px;font-size:20.8px;color:#111;font-weight:normal;transform-origin:0 15.93px;transform:scaleY(1.03);">−1</div><div class="t m" style="left:2141.54px;top:427.27px;font-size:20.8px;color:#111;font-weight:normal;transform-origin:0 15.93px;transform:scaleY(1.03);">−1</div><div class="t m" style="left:2278.85px;top:427.27px;font-size:20.8px;color:#111;font-weight:normal;transform-origin:0 15.93px;transform:scaleY(1.03);">−1</div><div class="t m" style="left:2416.16px;top:427.27px;font-size:20.8px;color:#111;font-weight:normal;transform-origin:0 15.93px;transform:scaleY(1.03);">−1</div><div class="a" style="left:96px;top:496.77px;width:2458px;height:1.7px;background:#ededed;"></div><div class="t m" style="left:195.90px;top:468.79px;font-size:20.8px;color:#111;font-weight:normal;transform-origin:100% 15.93px;transform:translateX(-100%) scaleY(1.03);">11</div><div class="t m" style="left:219.20px;top:468.79px;font-size:20.8px;color:#111;font-weight:normal;transform-origin:0 15.93px;transform:scaleY(1.03);">−1</div><div class="t m" style="left:356.51px;top:468.79px;font-size:20.8px;color:#111;font-weight:normal;transform-origin:0 15.93px;transform:scaleY(1.03);">−1</div><div class="t m" style="left:493.82px;top:468.79px;font-size:20.8px;color:#111;font-weight:normal;transform-origin:0 15.93px;transform:scaleY(1.03);">−1</div><div class="t m" style="left:631.13px;top:468.79px;font-size:20.8px;color:#111;font-weight:normal;transform-origin:0 15.93px;transform:scaleY(1.03);">−1</div><div class="t m" style="left:768.44px;top:468.79px;font-size:20.8px;color:#111;font-weight:normal;transform-origin:0 15.93px;transform:scaleY(1.03);">−1</div><div class="t m" style="left:905.75px;top:468.79px;font-size:20.8px;color:#111;font-weight:normal;transform-origin:0 15.93px;transform:scaleY(1.03);">−1</div><div class="t m" style="left:1043.06px;top:468.79px;font-size:20.8px;color:#111;font-weight:normal;transform-origin:0 15.93px;transform:scaleY(1.03);">−1</div><div class="t m" style="left:1180.37px;top:468.79px;font-size:20.8px;color:#111;font-weight:normal;transform-origin:0 15.93px;transform:scaleY(1.03);">−0.98431…</div><div class="t m" style="left:1317.68px;top:468.79px;font-size:20.8px;color:#111;font-weight:normal;transform-origin:0 15.93px;transform:scaleY(1.03);">0.388235…</div><div class="t m" style="left:1454.99px;top:468.79px;font-size:20.8px;color:#111;font-weight:normal;transform-origin:0 15.93px;transform:scaleY(1.03);">−0.85882…</div><div class="t m" style="left:1592.30px;top:468.79px;font-size:20.8px;color:#111;font-weight:normal;transform-origin:0 15.93px;transform:scaleY(1.03);">−1</div><div class="t m" style="left:1729.61px;top:468.79px;font-size:20.8px;color:#111;font-weight:normal;transform-origin:0 15.93px;transform:scaleY(1.03);">−1</div><div class="t m" style="left:1866.92px;top:468.79px;font-size:20.8px;color:#111;font-weight:normal;transform-origin:0 15.93px;transform:scaleY(1.03);">−1</div><div class="t m" style="left:2004.23px;top:468.79px;font-size:20.8px;color:#111;font-weight:normal;transform-origin:0 15.93px;transform:scaleY(1.03);">−1</div><div class="t m" style="left:2141.54px;top:468.79px;font-size:20.8px;color:#111;font-weight:normal;transform-origin:0 15.93px;transform:scaleY(1.03);">−1</div><div class="t m" style="left:2278.85px;top:468.79px;font-size:20.8px;color:#111;font-weight:normal;transform-origin:0 15.93px;transform:scaleY(1.03);">−1</div><div class="t m" style="left:2416.16px;top:468.79px;font-size:20.8px;color:#111;font-weight:normal;transform-origin:0 15.93px;transform:scaleY(1.03);">−1</div><div class="a" style="left:96px;top:538.29px;width:2458px;height:1.7px;background:#ededed;"></div><div class="t m" style="left:195.90px;top:510.31px;font-size:20.8px;color:#111;font-weight:normal;transform-origin:100% 15.93px;transform:translateX(-100%) scaleY(1.03);">12</div><div class="t m" style="left:219.20px;top:510.31px;font-size:20.8px;color:#111;font-weight:normal;transform-origin:0 15.93px;transform:scaleY(1.03);">−1</div><div class="t m" style="left:356.51px;top:510.31px;font-size:20.8px;color:#111;font-weight:normal;transform-origin:0 15.93px;transform:scaleY(1.03);">−1</div><div class="t m" style="left:493.82px;top:510.31px;font-size:20.8px;color:#111;font-weight:normal;transform-origin:0 15.93px;transform:scaleY(1.03);">−1</div><div class="t m" style="left:631.13px;top:510.31px;font-size:20.8px;color:#111;font-weight:normal;transform-origin:0 15.93px;transform:scaleY(1.03);">−1</div><div class="t m" style="left:768.44px;top:510.31px;font-size:20.8px;color:#111;font-weight:normal;transform-origin:0 15.93px;transform:scaleY(1.03);">−1</div><div class="t m" style="left:905.75px;top:510.31px;font-size:20.8px;color:#111;font-weight:normal;transform-origin:0 15.93px;transform:scaleY(1.03);">−1</div><div class="t m" style="left:1043.06px;top:510.31px;font-size:20.8px;color:#111;font-weight:normal;transform-origin:0 15.93px;transform:scaleY(1.03);">−1</div><div class="t m" style="left:1180.37px;top:510.31px;font-size:20.8px;color:#111;font-weight:normal;transform-origin:0 15.93px;transform:scaleY(1.03);">−1</div><div class="t m" style="left:1317.68px;top:510.31px;font-size:20.8px;color:#111;font-weight:normal;transform-origin:0 15.93px;transform:scaleY(1.03);">0.278431…</div><div class="t m" style="left:1454.99px;top:510.31px;font-size:20.8px;color:#111;font-weight:normal;transform-origin:0 15.93px;transform:scaleY(1.03);">−0.70980…</div><div class="t m" style="left:1592.30px;top:510.31px;font-size:20.8px;color:#111;font-weight:normal;transform-origin:0 15.93px;transform:scaleY(1.03);">−1</div><div class="t m" style="left:1729.61px;top:510.31px;font-size:20.8px;color:#111;font-weight:normal;transform-origin:0 15.93px;transform:scaleY(1.03);">−0.98431…</div><div class="t m" style="left:1866.92px;top:510.31px;font-size:20.8px;color:#111;font-weight:normal;transform-origin:0 15.93px;transform:scaleY(1.03);">−0.98431…</div><div class="t m" style="left:2004.23px;top:510.31px;font-size:20.8px;color:#111;font-weight:normal;transform-origin:0 15.93px;transform:scaleY(1.03);">−0.98431…</div><div class="t m" style="left:2141.54px;top:510.31px;font-size:20.8px;color:#111;font-weight:normal;transform-origin:0 15.93px;transform:scaleY(1.03);">−0.98431…</div><div class="t m" style="left:2278.85px;top:510.31px;font-size:20.8px;color:#111;font-weight:normal;transform-origin:0 15.93px;transform:scaleY(1.03);">−0.98431…</div><div class="t m" style="left:2416.16px;top:510.31px;font-size:20.8px;color:#111;font-weight:normal;transform-origin:0 15.93px;transform:scaleY(1.03);">−0.98431…</div><div class="a" style="left:205.05px;top:0px;width:1.7px;height:600px;background:#ededed;"></div><div class="a" style="left:342.36px;top:0px;width:1.7px;height:600px;background:#ededed;"></div><div class="a" style="left:479.67px;top:0px;width:1.7px;height:600px;background:#ededed;"></div><div class="a" style="left:616.98px;top:0px;width:1.7px;height:600px;background:#ededed;"></div><div class="a" style="left:754.29px;top:0px;width:1.7px;height:600px;background:#ededed;"></div><div class="a" style="left:891.60px;top:0px;width:1.7px;height:600px;background:#ededed;"></div><div class="a" style="left:1028.91px;top:0px;width:1.7px;height:600px;background:#ededed;"></div><div class="a" style="left:1166.22px;top:0px;width:1.7px;height:600px;background:#ededed;"></div><div class="a" style="left:1303.53px;top:0px;width:1.7px;height:600px;background:#ededed;"></div><div class="a" style="left:1440.84px;top:0px;width:1.7px;height:600px;background:#ededed;"></div><div class="a" style="left:1578.15px;top:0px;width:1.7px;height:600px;background:#ededed;"></div><div class="a" style="left:1715.46px;top:0px;width:1.7px;height:600px;background:#ededed;"></div><div class="a" style="left:1852.77px;top:0px;width:1.7px;height:600px;background:#ededed;"></div><div class="a" style="left:1990.08px;top:0px;width:1.7px;height:600px;background:#ededed;"></div><div class="a" style="left:2127.39px;top:0px;width:1.7px;height:600px;background:#ededed;"></div><div class="a" style="left:2264.70px;top:0px;width:1.7px;height:600px;background:#ededed;"></div><div class="a" style="left:2402.01px;top:0px;width:1.7px;height:600px;background:#ededed;"></div><div class="a" style="left:2539.32px;top:0px;width:1.7px;height:600px;background:#ededed;"></div><div class="a" style="left:96px;top:0px;width:1.7px;height:600px;background:#ededed;"></div></div><div class="t m" style="left:213.30px;top:413.27px;font-size:20.8px;color:#111;font-weight:bold;transform-origin:0 15.93px;transform:scaleY(1.03);">0</div><div class="a" style="left:213.10px;top:446.8px;width:123px;height:31px;background:#fff;"></div><div class="t m" style="left:350.61px;top:413.27px;font-size:20.8px;color:#111;font-weight:bold;transform-origin:0 15.93px;transform:scaleY(1.03);">1</div><div class="a" style="left:350.41px;top:446.8px;width:123px;height:31px;background:#fff;"></div><div class="t m" style="left:487.92px;top:413.27px;font-size:20.8px;color:#111;font-weight:bold;transform-origin:0 15.93px;transform:scaleY(1.03);">2</div><div class="a" style="left:487.72px;top:446.8px;width:123px;height:31px;background:#fff;"></div><div class="t m" style="left:625.23px;top:413.27px;font-size:20.8px;color:#111;font-weight:bold;transform-origin:0 15.93px;transform:scaleY(1.03);">3</div><div class="a" style="left:625.03px;top:446.8px;width:123px;height:31px;background:#fff;"></div><div class="t m" style="left:762.54px;top:413.27px;font-size:20.8px;color:#111;font-weight:bold;transform-origin:0 15.93px;transform:scaleY(1.03);">4</div><div class="a" style="left:762.34px;top:446.8px;width:123px;height:31px;background:#fff;"></div><div class="t m" style="left:899.85px;top:413.27px;font-size:20.8px;color:#111;font-weight:bold;transform-origin:0 15.93px;transform:scaleY(1.03);">5</div><div class="a" style="left:899.65px;top:446.8px;width:123px;height:31px;background:#fff;"></div><div class="t m" style="left:1037.16px;top:413.27px;font-size:20.8px;color:#111;font-weight:bold;transform-origin:0 15.93px;transform:scaleY(1.03);">6</div><div class="a" style="left:1036.96px;top:446.8px;width:123px;height:31px;background:#fff;"></div><div class="t m" style="left:1174.47px;top:413.27px;font-size:20.8px;color:#111;font-weight:bold;transform-origin:0 15.93px;transform:scaleY(1.03);">7</div><div class="a" style="left:1174.27px;top:446.8px;width:123px;height:31px;background:#fff;"></div><div class="t m" style="left:1311.78px;top:413.27px;font-size:20.8px;color:#111;font-weight:bold;transform-origin:0 15.93px;transform:scaleY(1.03);">8</div><div class="a" style="left:1311.58px;top:446.8px;width:123px;height:31px;background:#fff;"></div><div class="t m" style="left:1449.09px;top:413.27px;font-size:20.8px;color:#111;font-weight:bold;transform-origin:0 15.93px;transform:scaleY(1.03);">9</div><div class="a" style="left:1448.89px;top:446.8px;width:123px;height:31px;background:#fff;"></div><div class="t m" style="left:1586.40px;top:413.27px;font-size:20.8px;color:#111;font-weight:bold;transform-origin:0 15.93px;transform:scaleY(1.03);">10</div><div class="a" style="left:1586.20px;top:446.8px;width:123px;height:31px;background:#fff;"></div><div class="t m" style="left:1723.71px;top:413.27px;font-size:20.8px;color:#111;font-weight:bold;transform-origin:0 15.93px;transform:scaleY(1.03);">11</div><div class="a" style="left:1723.51px;top:446.8px;width:123px;height:31px;background:#fff;"></div><div class="t m" style="left:1861.02px;top:413.27px;font-size:20.8px;color:#111;font-weight:bold;transform-origin:0 15.93px;transform:scaleY(1.03);">12</div><div class="a" style="left:1860.82px;top:446.8px;width:123px;height:31px;background:#fff;"></div><div class="t m" style="left:1998.33px;top:413.27px;font-size:20.8px;color:#111;font-weight:bold;transform-origin:0 15.93px;transform:scaleY(1.03);">13</div><div class="a" style="left:1998.13px;top:446.8px;width:123px;height:31px;background:#fff;"></div><div class="t m" style="left:2135.64px;top:413.27px;font-size:20.8px;color:#111;font-weight:bold;transform-origin:0 15.93px;transform:scaleY(1.03);">14</div><div class="a" style="left:2135.44px;top:446.8px;width:123px;height:31px;background:#fff;"></div><div class="t m" style="left:2272.95px;top:413.27px;font-size:20.8px;color:#111;font-weight:bold;transform-origin:0 15.93px;transform:scaleY(1.03);">15</div><div class="a" style="left:2272.75px;top:446.8px;width:123px;height:31px;background:#fff;"></div><div class="t m" style="left:2410.26px;top:413.27px;font-size:20.8px;color:#111;font-weight:bold;transform-origin:0 15.93px;transform:scaleY(1.03);">16</div><div class="a" style="left:2410.06px;top:446.8px;width:123px;height:31px;background:#fff;"></div><div class="t m" style="left:2547.57px;top:413.27px;font-size:20.8px;color:#111;font-weight:bold;transform-origin:0 15.93px;transform:scaleY(1.03);">17</div><div class="a" style="left:2547.37px;top:446.8px;width:123px;height:31px;background:#fff;"></div><div class="a" style="left:2558px;top:401px;width:1px;height:90px;background:#fff;"></div><div class="a" style="left:96px;top:1007px;width:1529px;height:17px;background:#c8c8c8;"></div><div class="a" style="left:2555px;top:487.2px;width:3px;height:232.5px;background:#c3c3c3;"></div><div class="a" style="left:82px;top:1033px;width:2476px;height:1.6px;background:#e0e0e0;"></div><div class="t" style="left:116.80px;top:1055.81px;font-size:19px;color:#737373;letter-spacing:-1.071px;font-weight:normal;">PROBLEMS</div><div class="t" style="left:249.80px;top:1055.81px;font-size:19px;color:#737373;letter-spacing:-0.800px;font-weight:normal;">OUTPUT</div><div class="t" style="left:359.00px;top:1055.81px;font-size:19px;color:#737373;letter-spacing:-0.833px;font-weight:normal;">DEBUG CONSOLE</div><div class="t" style="left:550.00px;top:1055.81px;font-size:19px;color:#737373;letter-spacing:-1.000px;font-weight:normal;">TERMINAL</div><div class="t" style="left:675.00px;top:1055.81px;font-size:19px;color:#3f3f3f;letter-spacing:-0.853px;font-weight:normal;">JUPYTER: VARIABLES</div><div class="a" style="left:675px;top:1088.6px;width:187px;height:1.3px;background:#444;"></div><div class="t m" style="left:91.00px;top:1105.67px;font-size:20.8px;color:#111;font-weight:normal;transform-origin:0 15.93px;transform:scaleY(1.06);">Variables</div><div class="a" style="left:1300px;top:1134px;width:1243px;height:39px;background:#f3f3f3;"></div><div class="a" style="left:98px;top:1134px;width:1203px;height:39.5px;background:#efefef;border:2px solid #c8c8c8"></div><div class="a" style="left:158.9px;top:1134px;width:3.2px;height:39.5px;background:#c8c8c8;"></div><div class="a" style="left:366.2px;top:1134px;width:3.2px;height:39.5px;background:#c8c8c8;"></div><div class="a" style="left:573.8px;top:1134px;width:3.2px;height:39.5px;background:#c8c8c8;"></div><div class="a" style="left:781.0px;top:1134px;width:3.2px;height:39.5px;background:#c8c8c8;"></div><div class="t m" style="left:166.50px;top:1143.57px;font-size:20.8px;color:#111;font-weight:bold;transform-origin:0 15.93px;transform:scaleY(1.04);">Name</div><div class="t m" style="left:373.50px;top:1143.57px;font-size:20.8px;color:#111;font-weight:bold;transform-origin:0 15.93px;transform:scaleY(1.04);">Type</div><div class="t m" style="left:580.80px;top:1143.57px;font-size:20.8px;color:#111;font-weight:bold;transform-origin:0 15.93px;transform:scaleY(1.04);">Size</div><div class="t m" style="left:788.00px;top:1143.57px;font-size:20.8px;color:#111;font-weight:bold;transform-origin:0 15.93px;transform:scaleY(1.04);">Value</div><div class="t m" style="left:175.10px;top:1186.87px;font-size:20.8px;color:#001080;font-weight:normal;transform-origin:0 15.93px;transform:scaleY(1.06);">images</div><div class="t m" style="left:380.50px;top:1186.87px;font-size:20.8px;color:#a31515;font-weight:normal;transform-origin:0 15.93px;transform:scaleY(1.06);">Tensor</div><div class="t m" style="left:588.50px;top:1186.87px;font-size:20.8px;color:#098658;font-weight:normal;transform-origin:0 15.93px;transform:scaleY(1.06);">(4, 1, 28, 28)</div><div class="a" style="left:780px;top:1164.60px;width:505.6px;height:60px;overflow:hidden"><div class="t m" style="left:15.90px;top:22.27px;font-size:20.8px;color:#a31515;font-weight:normal;transform-origin:0 15.93px;transform:scaleY(1.06);">tensor([[[[−1., −1., −1., ..., −1., −1., −1.],</div></div><div class="a" style="left:98px;top:1214.40px;width:1202px;height:39.6px;background:#f0f0f0;"></div><div class="t m" style="left:175.10px;top:1226.57px;font-size:20.8px;color:#001080;font-weight:normal;transform-origin:0 15.93px;transform:scaleY(1.06);">labels</div><div class="t m" style="left:380.50px;top:1226.57px;font-size:20.8px;color:#a31515;font-weight:normal;transform-origin:0 15.93px;transform:scaleY(1.06);">Tensor</div><div class="t m" style="left:588.50px;top:1226.57px;font-size:20.8px;color:#098658;font-weight:normal;transform-origin:0 15.93px;transform:scaleY(1.06);">(4)</div><div class="a" style="left:780px;top:1204.40px;width:505.6px;height:60px;overflow:hidden"><div class="t m" style="left:15.90px;top:22.17px;font-size:20.8px;color:#a31515;font-weight:normal;transform-origin:0 15.93px;transform:scaleY(1.06);">tensor([8, 8, 5, 3])</div></div><div class="t m" style="left:175.10px;top:1266.27px;font-size:20.8px;color:#001080;font-weight:normal;transform-origin:0 15.93px;transform:scaleY(1.06);">test</div><div class="t m" style="left:380.50px;top:1266.27px;font-size:20.8px;color:#a31515;font-weight:normal;transform-origin:0 15.93px;transform:scaleY(1.06);">Tensor</div><div class="t m" style="left:588.50px;top:1266.27px;font-size:20.8px;color:#098658;font-weight:normal;transform-origin:0 15.93px;transform:scaleY(1.06);">(4, 28, 28)</div><div class="a" style="left:780px;top:1244.20px;width:505.6px;height:60px;overflow:hidden"><div class="t m" style="left:15.90px;top:22.07px;font-size:20.8px;color:#a31515;font-weight:normal;transform-origin:0 15.93px;transform:scaleY(1.06);">tensor([[[−1., −1., −1., ..., −1., −1., −1.],</div></div><div class="a" style="left:98px;top:1294.00px;width:1202px;height:39.6px;background:#f0f0f0;"></div><div class="t m" style="left:175.10px;top:1305.97px;font-size:20.8px;color:#001080;font-weight:normal;transform-origin:0 15.93px;transform:scaleY(1.06);">testloader</div><div class="t m" style="left:380.50px;top:1305.97px;font-size:20.8px;color:#a31515;font-weight:normal;transform-origin:0 15.93px;transform:scaleY(1.06);">DataLoader</div><div class="t m" style="left:588.50px;top:1305.97px;font-size:20.8px;color:#098658;font-weight:normal;transform-origin:0 15.93px;transform:scaleY(1.06);">2500</div><div class="a" style="left:780px;top:1284.00px;width:505.6px;height:60px;overflow:hidden"><div class="t m" style="left:15.90px;top:21.97px;font-size:20.8px;color:#a31515;font-weight:normal;transform-origin:0 15.93px;transform:scaleY(1.06);">&lt;torch.utils.data.dataloader.DataLoader object at 0x7f&gt;</div></div><div class="t m" style="left:175.10px;top:1345.67px;font-size:20.8px;color:#001080;font-weight:normal;transform-origin:0 15.93px;transform:scaleY(1.06);">testset</div><div class="t m" style="left:380.50px;top:1345.67px;font-size:20.8px;color:#a31515;font-weight:normal;transform-origin:0 15.93px;transform:scaleY(1.06);">FashionMNIST</div><div class="t m" style="left:588.50px;top:1345.67px;font-size:20.8px;color:#098658;font-weight:normal;transform-origin:0 15.93px;transform:scaleY(1.06);">10000</div><div class="a" style="left:780px;top:1323.80px;width:505.6px;height:60px;overflow:hidden"><div class="t m" style="left:15.90px;top:21.87px;font-size:20.8px;color:#a31515;font-weight:normal;transform-origin:0 15.93px;transform:scaleY(1.06);">Dataset FashionMNIST Number of datapoints: 10000</div></div><div class="a" style="left:98px;top:1373.8px;width:1202px;height:1.4px;background:#ececec;"></div><div class="a" style="left:2526px;top:1234px;width:17px;height:79px;background:#c8c8c8;"></div><div class="a" style="left:0px;top:1377px;width:2558px;height:37px;background:#0283d8;"></div><div class="a" style="left:0px;top:1377px;width:58px;height:37px;background:#1f9461;"></div><div class="t" style="left:100.80px;top:1386.56px;font-size:20.6px;color:#fff;letter-spacing:-0.333px;font-weight:normal;">master*</div><div class="t" style="left:251.00px;top:1386.56px;font-size:20.6px;color:#fff;letter-spacing:0.027px;font-weight:normal;">Python 3.7.7 64-bit ('pytorch': conda)</div><div class="t" style="left:645.50px;top:1386.56px;font-size:20.6px;color:#fff;letter-spacing:0.000px;font-weight:normal;">0</div><div class="t" style="left:692.60px;top:1386.56px;font-size:20.6px;color:#fff;letter-spacing:0.000px;font-weight:normal;">0</div><div class="t" style="left:761.00px;top:1386.56px;font-size:20.6px;color:#fff;letter-spacing:-0.611px;font-weight:normal;">Live Share</div><svg class="a" style="left:0;top:0" width="2560" height="1414" viewBox="0 0 2560 1414"><path d="M33.3,60.2 H24.7 Q22.7,60.2 22.7,62.2 V86.5 Q22.7,88.5 24.7,88.5 H42" fill="none" stroke="#8f8f8f" stroke-width="2.5" stroke-linejoin="round"/><path d="M41,78.3 H35.3 Q33.3,78.3 33.3,76.3 V51.85 Q33.3,49.85 35.3,49.85 H49.6 L56.2,56.4 V70" fill="none" stroke="#8f8f8f" stroke-width="2.5" stroke-linejoin="round"/><path d="M48.6,50.5 V57.6 H56" fill="none" stroke="#8f8f8f" stroke-width="2.5" stroke-linejoin="round"/><circle cx="46" cy="152.7" r="12.4" fill="none" stroke="#8f8f8f" stroke-width="2.5" stroke-linejoin="round"/><path d="M37.3,161.6 L22.4,178.2" fill="none" stroke="#8f8f8f" stroke-width="2.5" stroke-linejoin="round"/><circle cx="31.4" cy="234.5" r="4.9" fill="none" stroke="#8f8f8f" stroke-width="2.5" stroke-linejoin="round"/><circle cx="49.4" cy="242.4" r="4.9" fill="none" stroke="#8f8f8f" stroke-width="2.5" stroke-linejoin="round"/><path d="M31.4,239.4 V258" fill="none" stroke="#8f8f8f" stroke-width="2.5" stroke-linejoin="round"/><circle cx="31.4" cy="263.2" r="4.9" fill="none" stroke="#8f8f8f" stroke-width="2.5" stroke-linejoin="round"/><path d="M34.2,337.4 V319.1 L60,335.7 L43.3,346.9" fill="none" stroke="#8f8f8f" stroke-width="2.5" stroke-linejoin="round" stroke-linejoin="miter"/><ellipse cx="30.1" cy="350" rx="6.3" ry="8.7" fill="none" stroke="#8f8f8f" stroke-width="2.5" stroke-linejoin="round"/><path d="M23.8,346.9 H36.4 M20.8,342.9 L24.6,346 M39.6,342.9 L35.8,346 M19.6,351 H23.5 M36.7,351 H40.6 M20.8,358.8 L24.8,355 M39.4,358.8 L35.4,355" fill="none" stroke="#8f8f8f" stroke-width="2.5" stroke-linejoin="round"/><rect x="44.5" y="408.9" width="15.1" height="15.3" rx="2" fill="none" stroke="#8f8f8f" stroke-width="2.5" stroke-linejoin="round"/><path d="M36.5,416.5 H23.2 Q21.2,416.5 21.2,418.5 V445.3 Q21.2,447.3 23.2,447.3 H51.8 V432 H21.2 M36.5,416.5 V447.3" fill="none" stroke="#8f8f8f" stroke-width="2.5" stroke-linejoin="round"/><path d="M21.4,525.1 C23,512 32,505.6 45.4,505.6 V499 L59.6,511.3 L45.4,521.9 V515.8 C34,515.8 27,519 21.4,525.1 Z" fill="none" stroke="#8f8f8f" stroke-width="2.5" stroke-linejoin="round"/><circle cx="37.1" cy="531.3" r="6.9" fill="none" stroke="#8f8f8f" stroke-width="2.5" stroke-linejoin="round"/><circle cx="40.5" cy="1238.2" r="19.2" fill="none" stroke="#8f8f8f" stroke-width="2.5" stroke-linejoin="round"/><circle cx="40.5" cy="1234.6" r="8.3" fill="none" stroke="#8f8f8f" stroke-width="2.5" stroke-linejoin="round"/><path d="M28.6,1252.5 C31,1247 35,1244 40.5,1244 C46,1244 50,1247 52.4,1252.5" fill="none" stroke="#8f8f8f" stroke-width="2.5" stroke-linejoin="round"/><path d="M37.33,1314.78 L37.33,1309.06 L43.67,1309.06 L43.67,1314.78 L47.61,1316.40 L51.65,1312.37 L56.13,1316.85 L52.10,1320.89 L53.72,1324.83 L59.44,1324.83 L59.44,1331.17 L53.72,1331.17 L52.10,1335.11 L56.13,1339.15 L51.65,1343.63 L47.61,1339.60 L43.67,1341.22 L43.67,1346.94 L37.33,1346.94 L37.33,1341.22 L33.39,1339.60 L29.35,1343.63 L24.87,1339.15 L28.90,1335.11 L27.28,1331.17 L21.56,1331.17 L21.56,1324.83 L27.28,1324.83 L28.90,1320.89 L24.87,1316.85 L29.35,1312.37 L33.39,1316.40Z" fill="none" stroke="#8f8f8f" stroke-width="2.5" stroke-linejoin="miter"/><circle cx="40.5" cy="1328" r="4.8" fill="none" stroke="#8f8f8f" stroke-width="2.5" stroke-linejoin="round"/><circle cx="54.5" cy="82.7" r="13.4" fill="#0283d8"/><path d="M54.1,77.00 H56.9 V87.80 H54.1 V80.40 L50.9,82.00 V79.40 Z" fill="#fff"/><circle cx="54.5" cy="442.4" r="13.4" fill="#0283d8"/><path d="M54.1,436.70 H56.9 V447.50 H54.1 V440.10 L50.9,441.70 V439.10 Z" fill="#fff"/><circle cx="54.5" cy="1342.4" r="13.4" fill="#0283d8"/><path d="M54.1,1336.70 H56.9 V1347.50 H54.1 V1340.10 L50.9,1341.70 V1339.10 Z" fill="#fff"/><rect x="26.9" y="248.9" width="41" height="28" rx="14" fill="#0283d8"/><path d="M36.7,256.6 H39.5 V267.8 H36.7 V260.2 L33.9,261.8 V259.2 Z" fill="#fff"/><text x="41.3" y="267.9" font-family="Liberation Sans" font-weight="bold" font-size="16" letter-spacing="0.6" fill="#fff">03</text><rect x="107.6" y="48.9" width="14.3" height="18.6" rx="1.5" fill="#5b7fc2"/><rect x="111" y="52" width="7.8" height="3" fill="#f2f2f2"/><path d="M123.6,53 V56 M123.6,57.3 V60.3 M123.6,61.6 V64.6" stroke="#5b7fc2" stroke-width="1.3"/><path d="M365.7,51.5 H379.0 M365.7,55.9 H373.0 M365.7,60.2 H379.0 M365.7,64.7 H375.9" stroke="#c4c4c4" stroke-width="2"/><path d="M645.5,51.5 H658.8 M645.5,55.9 H652.8 M645.5,60.2 H658.8 M645.5,64.7 H655.7" stroke="#c4c4c4" stroke-width="2"/><path d="M578.3,50.5 L591.5,63.5 M591.5,50.5 L578.3,63.5" stroke="#333" stroke-width="1.9"/><rect x="2340.4" y="51.2" width="13.8" height="13.8" rx="1.3" fill="none" stroke="#676767" stroke-width="1.6"/><path d="M2390.4,50.4 H2414.8 M2390.4,55.6 H2414.8 M2390.4,60.7 H2403.8 M2390.4,66 H2403.8 M2406.6,60.3 L2413.4,66.6 M2413.4,60.3 L2406.6,66.6" stroke="#676767" stroke-width="1.6"/><rect x="2448.7" y="47.1" width="20.4" height="20.2" rx="2.5" fill="none" stroke="#676767" stroke-width="1.6"/><path d="M2459,47.1 V67.3" stroke="#676767" stroke-width="1.6"/><circle cx="2504.7" cy="58.1" r="1.6" fill="#676767"/><circle cx="2513.3" cy="58.1" r="1.6" fill="#676767"/><circle cx="2521.9" cy="58.1" r="1.6" fill="#676767"/><path d="M107.3,106.9 C103.5,106.9 103.8,108.6 103.8,108.6 V110.6 H107.5 V111.3 H101.9 C101.9,111.3 99.4,111 99.4,115.3 C99.4,119.5 101.6,119.4 101.6,119.4 H102.9 V117.4 C102.9,117.4 102.8,115.2 105.1,115.2 H108.9 C108.9,115.2 111,115.2 111,113.2 V109.7 C111,109.7 111.3,106.9 107.3,106.9 Z" fill="#4b9fe0"/><path d="M108.2,124.1 C112,124.1 111.7,122.4 111.7,122.4 V120.4 H108 V119.7 H113.6 C113.6,119.7 116.1,120 116.1,115.7 C116.1,111.5 113.9,111.6 113.9,111.6 H112.6 V113.6 C112.6,113.6 112.7,115.8 110.4,115.8 H106.6 C106.6,115.8 104.5,115.8 104.5,117.8 V121.3 C104.5,121.3 104.2,124.1 108.2,124.1 Z" fill="#4b9fe0"/><circle cx="105.8" cy="108.9" r="0.9" fill="#fff"/><circle cx="109.7" cy="122.1" r="0.9" fill="#fff"/><path d="M262.2,110.6 L269.6,118.2 L262.2,125.8" fill="none" stroke="#808080" stroke-width="1.5"/><path d="M98,164.6 L106.1,172.5 L114.2,164.6" fill="none" stroke="#111" stroke-width="1.9"/><path d="M122.3,214.6 L128.1,222 L142.6,205.8" fill="none" stroke="#111" stroke-width="2.4"/><path d="M223.8,362.8 L231.0,369.8 L238.20000000000002,362.8" fill="none" stroke="#555" stroke-width="1.4"/><path d="M329.5,362.8 L336.7,369.8 L343.9,362.8" fill="none" stroke="#555" stroke-width="1.4"/><path d="M111,418 H133 V419.6 L124.5,428 V436.6 H119 V428 L111,419.6 Z" fill="none" stroke="#111" stroke-width="1.9" stroke-linejoin="miter"/><path d="M168.28,418.48 A9.3,9.3 0 1 1 159.07,419.77" fill="none" stroke="#111" stroke-width="1.9"/><path d="M154.6,418 H160.6 V423.8" fill="none" stroke="#111" stroke-width="1.9"/><path d="M185.3,423.6 L190.6,418.5 L195.9,423.6 M190.6,418.5 V430.6" fill="none" stroke="#a0a0a0" stroke-width="1.3"/><path d="M110,457.2 H133.8 M110,462.6 H133.8 M110,467.7 H123.1 M110,472.8 H123.1 M126.4,467.4 L132.5,473.4 M132.5,467.4 L126.4,473.4" stroke="#111" stroke-width="1.9"/><path d="M220.0,453.6 H241.1 V455 L232.7,463.4 V471.8 H228.4 V463.4 L220.0,455 Z" fill="none" stroke="#bdbdbd" stroke-width="1.1"/><path d="M357.3,453.6 H378.40000000000003 V455 L370.0,463.4 V471.8 H365.7 V463.4 L357.3,455 Z" fill="none" stroke="#bdbdbd" stroke-width="1.1"/><path d="M494.6,453.6 H515.7 V455 L507.3,463.4 V471.8 H503.0 V463.4 L494.6,455 Z" fill="none" stroke="#bdbdbd" stroke-width="1.1"/><path d="M631.9000000000001,453.6 H653.0000000000001 V455 L644.6000000000001,463.4 V471.8 H640.3000000000001 V463.4 L631.9000000000001,455 Z" fill="none" stroke="#bdbdbd" stroke-width="1.1"/><path d="M769.2,453.6 H790.3000000000001 V455 L781.9000000000001,463.4 V471.8 H777.6 V463.4 L769.2,455 Z" fill="none" stroke="#bdbdbd" stroke-width="1.1"/><path d="M906.5,453.6 H927.6 V455 L919.2,463.4 V471.8 H914.9 V463.4 L906.5,455 Z" fill="none" stroke="#bdbdbd" stroke-width="1.1"/><path d="M1043.8000000000002,453.6 H1064.9 V455 L1056.5000000000002,463.4 V471.8 H1052.2000000000003 V463.4 L1043.8000000000002,455 Z" fill="none" stroke="#bdbdbd" stroke-width="1.1"/><path d="M1181.1000000000001,453.6 H1202.2 V455 L1193.8000000000002,463.4 V471.8 H1189.5000000000002 V463.4 L1181.1000000000001,455 Z" fill="none" stroke="#bdbdbd" stroke-width="1.1"/><path d="M1318.4,453.6 H1339.5 V455 L1331.1000000000001,463.4 V471.8 H1326.8000000000002 V463.4 L1318.4,455 Z" fill="none" stroke="#bdbdbd" stroke-width="1.1"/><path d="M1455.7,453.6 H1476.8 V455 L1468.4,463.4 V471.8 H1464.1000000000001 V463.4 L1455.7,455 Z" fill="none" stroke="#bdbdbd" stroke-width="1.1"/><path d="M1593.0,453.6 H1614.1 V455 L1605.7,463.4 V471.8 H1601.4 V463.4 L1593.0,455 Z" fill="none" stroke="#bdbdbd" stroke-width="1.1"/><path d="M1730.3000000000002,453.6 H1751.4 V455 L1743.0000000000002,463.4 V471.8 H1738.7000000000003 V463.4 L1730.3000000000002,455 Z" fill="none" stroke="#bdbdbd" stroke-width="1.1"/><path d="M1867.6000000000001,453.6 H1888.7 V455 L1880.3000000000002,463.4 V471.8 H1876.0000000000002 V463.4 L1867.6000000000001,455 Z" fill="none" stroke="#bdbdbd" stroke-width="1.1"/><path d="M2004.9,453.6 H2026.0 V455 L2017.6000000000001,463.4 V471.8 H2013.3000000000002 V463.4 L2004.9,455 Z" fill="none" stroke="#bdbdbd" stroke-width="1.1"/><path d="M2142.2000000000003,453.6 H2163.3 V455 L2154.9,463.4 V471.8 H2150.6000000000004 V463.4 L2142.2000000000003,455 Z" fill="none" stroke="#bdbdbd" stroke-width="1.1"/><path d="M2279.5,453.6 H2300.6 V455 L2292.2,463.4 V471.8 H2287.9 V463.4 L2279.5,455 Z" fill="none" stroke="#bdbdbd" stroke-width="1.1"/><path d="M2416.8,453.6 H2437.9 V455 L2429.5,463.4 V471.8 H2425.2000000000003 V463.4 L2416.8,455 Z" fill="none" stroke="#bdbdbd" stroke-width="1.1"/><path d="M2554.1000000000004,453.6 H2575.2000000000003 V455 L2566.8,463.4 V471.8 H2562.5000000000005 V463.4 L2554.1000000000004,455 Z" fill="none" stroke="#bdbdbd" stroke-width="1.1"/><path d="M2450.4,1068.1 L2458,1060.6 L2465.6,1068.1" fill="none" stroke="#616161" stroke-width="1.6"/><path d="M2507,1058.8 L2519.6,1071.4 M2519.6,1058.8 L2507,1071.4" fill="none" stroke="#616161" stroke-width="1.6"/><path d="M122.5,1187.3 H113.8 V1207.5 H134.8 V1198.5 M119.2,1187.3 V1182 H140 V1203 H134.8 M127.5,1187.5 H134.4 V1194.5 M125.6,1196.3 L134,1187.9" fill="none" stroke="#424242" stroke-width="1.6"/><path d="M122.5,1227.3 H113.8 V1247.5 H134.8 V1238.5 M119.2,1227.3 V1222 H140 V1243 H134.8 M127.5,1227.5 H134.4 V1234.5 M125.6,1236.3 L134,1227.9" fill="none" stroke="#424242" stroke-width="1.6"/><path d="M122.5,1267.3 H113.8 V1287.5 H134.8 V1278.5 M119.2,1267.3 V1262 H140 V1283 H134.8 M127.5,1267.5 H134.4 V1274.5 M125.6,1276.3 L134,1267.9" fill="none" stroke="#424242" stroke-width="1.6"/><path d="M21.4,1392.2 L27.6,1398.4 L21.4,1404.6 M35.2,1386.3 L29,1392.4 L35.2,1398.5" stroke-width="1.4" fill="none" stroke="#fff"/><circle cx="78.2" cy="1388" r="3" stroke-width="1.4" fill="none" stroke="#fff"/><circle cx="78.2" cy="1404" r="3" stroke-width="1.4" fill="none" stroke="#fff"/><circle cx="88.9" cy="1392" r="3" stroke-width="1.4" fill="none" stroke="#fff"/><path d="M78.2,1391 V1401 M88.4,1395 C87.5,1398 84,1398 81,1398.6 C79.3,1399 78.4,1400 78.2,1401" stroke-width="1.4" fill="none" stroke="#fff"/><path d="M209,1401.3 H206 C203.3,1401.3 201.6,1399 201.6,1396.3 C201.6,1393.4 203.8,1391.4 206.8,1391.4 C208,1389 210,1388.4 212.2,1388.4 C215.4,1388.4 217,1390.3 217.6,1392.8 C220,1393.2 221.3,1394.8 221.3,1397 C221.3,1399.5 219.6,1401.3 217.3,1401.3 H215" stroke-width="1.4" fill="none" stroke="#fff"/><path d="M212.3,1404.6 V1394.8 M209.2,1397.6 L212.3,1394.6 L215.4,1397.6" stroke-width="1.4" fill="none" stroke="#fff"/><circle cx="628.1" cy="1395.6" r="9.3" stroke-width="1.4" fill="none" stroke="#fff"/><path d="M624.4,1391.9 L632,1399.5 M632,1391.9 L624.4,1399.5" stroke-width="1.4" fill="none" stroke="#fff"/><path d="M675,1386 L684.6,1403.5 H665.4 Z" stroke-width="1.4" fill="none" stroke="#fff" stroke-linejoin="miter"/><path d="M675,1393 V1399" stroke="#fff" stroke-width="1.4"/><rect x="674.3" y="1400.4" width="1.4" height="1.4" fill="#fff"/><path d="M733.6,1399.6 C734.5,1393 739,1389.4 747.5,1389.4 V1385.8 L755.3,1391.9 L747.5,1397.8 V1394.3 C741,1394.3 737,1396 733.6,1399.6 Z" stroke-width="1.4" fill="none" stroke="#fff"/><circle cx="742.8" cy="1402.4" r="3.7" stroke-width="1.4" fill="none" stroke="#fff"/><circle cx="2464.9" cy="1394.9" r="4" stroke-width="1.4" fill="none" stroke="#fff"/><path d="M2458.3,1406.4 C2458.8,1402 2461.5,1399.8 2465,1399.8 C2468.6,1399.8 2471.3,1402 2471.8,1406.4" stroke-width="1.4" fill="none" stroke="#fff"/><path d="M2463.6,1388.8 V1386.1 H2478 V1395.4 H2475.6 L2472.4,1398.6 V1395.4" stroke-width="1.4" fill="none" stroke="#fff"/><path d="M2512.1,1402.4 C2513.2,1399 2513.2,1396 2513.2,1392.6 C2513.2,1388.6 2516,1386.1 2519.8,1386.1 C2523.6,1386.1 2526.4,1388.6 2526.4,1392.6 C2526.4,1396 2526.4,1399 2527.6,1402.4 Z M2517.6,1402.6 C2517.8,1404.2 2518.6,1405 2519.8,1405 C2521,1405 2521.8,1404.2 2522,1402.6" stroke-width="1.4" fill="none" stroke="#fff"/></svg></div><div class="a" style="left:2559px;top:891px;width:1px;height:52px;background:#5b7fc0;"></div><div class="a" style="left:2559px;top:943px;width:1px;height:440px;background:#f2f2f2;"></div><div></div>
</body></html>
